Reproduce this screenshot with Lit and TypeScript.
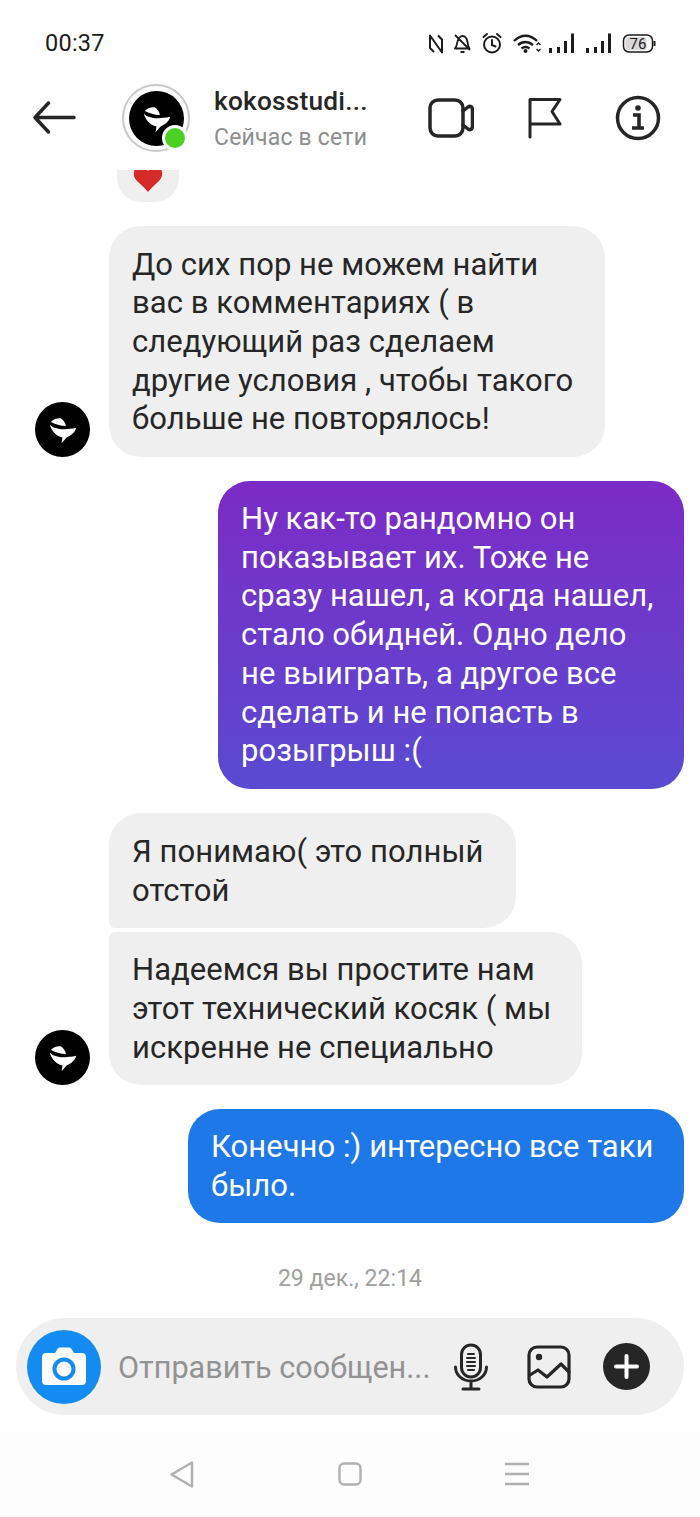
import { LitElement, html, css } from "lit";
import { customElement } from "lit/decorators.js";

const logo = html`<svg class="logo" viewBox="0 0 40 40"><circle cx="20" cy="20" r="20" fill="#000"/><path fill="#fff" d="M11.500 14.500C14 12 17 11.500 19 12C20.500 13 22 15 22.500 17.500C18.500 17.500 14.500 16 11.500 14.500Z"/><path fill="#fff" d="M10.800 16.500C14 19.500 20 21 30 18.800C29 22.500 26 24.500 23 25.800L19.300 30L20 25.800C15 24.500 12 21 10.800 16.500Z"/></svg>`;

@customElement("app-root")
export class AppRoot extends LitElement {
  static styles = css`
    :host { display: block; width: 700px; height: 1517px; background: #fff; overflow: hidden; font-family: Roboto, "Noto Sans", sans-serif; color: #262626; }
    .page { display: flex; flex-direction: column; height: 1517px; }
    .status { flex: none; height: 70px; padding: 15px 42px 0 45px; display: flex; align-items: center; justify-content: space-between; box-sizing: border-box; }
    .time { font-size: 23.500px; color: #1c1c1c; letter-spacing: 0.25px; }
    .status-icons { display: block; }
    .header { flex: none; height: 100px; display: flex; align-items: center; box-sizing: border-box; padding: 0 0 4px 32px; }
    .back { width: 46px; height: 36px; margin-right: 44px; flex: none; }
    .avatar-wrap { position: relative; width: 68px; height: 68px; flex: none; margin-right: 24px; }
    .ring { width: 68px; height: 68px; box-sizing: border-box; border: 2px solid #c9c9c9; border-radius: 50%; display: flex; align-items: center; justify-content: center; }
    .ring .logo { width: 55px; height: 55px; }
    .online { position: absolute; right: 2px; bottom: 1px; width: 20px; height: 20px; background: #4cd024; border: 3px solid #fff; border-radius: 50%; }
    .who { width: 190px; flex: none; padding-bottom: 0; }
    .name { font-size: 26.300px; font-weight: 500; line-height: 32px; color: #262626; letter-spacing: 0.2px; }
    .sub { font-size: 23px; line-height: 30px; margin-top: 6px; margin-bottom: -2px; color: #8e8e8e; letter-spacing: 0.2px; }
    .hicons { display: flex; align-items: center; margin-left: 24px; }
    .flag { margin-left: 53px; }
    .info { margin-left: 52px; }
    .thread { flex: 1; min-height: 0; display: flex; flex-direction: column; padding: 0 16px; }
    .chip { width: 62px; height: 32px; flex: none; background: #efefef; border-radius: 0 0 24px 24px; margin-left: 101px; display: flex; justify-content: center; align-items: flex-start; }
    .row { display: flex; align-items: flex-end; flex: none; }
    .row.in { margin-top: 24px; }
    .row.in .av { width: 55px; height: 55px; flex: none; margin: 0 19px; }
    .av .logo { width: 55px; height: 55px; display: block; }
    .stack { display: flex; flex-direction: column; gap: 4px; align-items: flex-start; }
    .b { box-sizing: border-box; flex: none; border-radius: 32px; padding: 19.500px 23px 17.500px; font-size: 31px; letter-spacing: 0.05px; line-height: 38.700px; background: #efefef; color: #262626; white-space: pre-line; }
    .b.first { border-bottom-left-radius: 6px; }
    .b.last { border-top-left-radius: 6px; }
    .w1 { width: 496px; }
    .w3 { width: 407px; }
    .w4 { width: 473px; }
    .out { align-self: flex-end; color: #fff; margin-top: 24px; }
    .grad { width: 466px; padding-bottom: 18.500px; background: linear-gradient(180deg, #7c2bc5 0%, #5a4ad2 100%); }
    .blue { width: 496px; background: #1f78e8; }
    .date { text-align: center; font-size: 23.100px; color: #a0a0a0; margin-top: 42px; line-height: 28px; }
    .composer { flex: none; margin: 0 16px; height: 97px; background: #efefef; border-radius: 49px; display: flex; align-items: center; padding: 0 34px 0 11px; }
    .cam { width: 74px; height: 74px; background: #148bf0; border-radius: 50%; flex: none; display: flex; align-items: center; justify-content: center; margin-right: 17px; }
    .ph { font-size: 30.600px; color: #929292; width: 316px; flex: none; white-space: nowrap; overflow: hidden; margin-right: 20px; padding-top: 2px; }
    .cicons { display: flex; align-items: center; }
    .pic { margin-left: 39px; }
    .plus { margin-left: 32px; }
    .nav { flex: none; margin-top: 17px; height: 85px; background: #fdfdfd; padding-top: 22px; box-sizing: border-box; display: flex; justify-content: center; }
    .nav svg { display: block; }
  `;

  render() {
    return html`<div class="page">
      <div class="status">
        <span class="time">00:37</span>
        <svg class="status-icons" width="232" height="26" viewBox="0 0 232 26" fill="none" stroke="#1c1c1c">
          <path stroke-width="2" stroke-linejoin="round" d="M8 22 4 18V5.500L16 22.500V9.500L12 5.500"/>
          <path stroke-width="1.800" stroke-linejoin="round" d="M29 18.500c2-2 1.500-4 2.500-7 .7-3 3-5.500 5-5.500 3 0 4.500 3 5 6 .5 3 .5 4.500 2 6.500zM29 5l15 15M34.500 22h4"/>
          <circle stroke-width="2" cx="66" cy="14.500" r="8"/><path stroke-width="2" stroke-linecap="round" d="M66 10v5l3.500 1.500M57.500 7l3.500-3M74.500 7l-3.500-3"/>
          <path stroke-width="2.400" d="M88 11c7-7 16-7 23 0M92 15c4.500-4 10.500-4 15 0M95.500 18.500c2.500-2 5.500-2 8 0"/><circle cx="99.500" cy="21" r="2" fill="#1c1c1c" stroke="none"/><path stroke-width="1.400" d="M110.500 15l2-2 2 2M110.500 19l2 2 2-2"/>
          <g fill="#1c1c1c" stroke="none"><rect x="123" y="18" width="3" height="5"/><rect x="131" y="17" width="3" height="6"/><rect x="138" y="11" width="3" height="12"/><rect x="145" y="3.500" width="3" height="19.500"/><rect x="160" y="18" width="3" height="5"/><rect x="168" y="17" width="3" height="6"/><rect x="175" y="11" width="3" height="12"/><rect x="182" y="3.500" width="3" height="19.500"/></g>
          <rect x="197.500" y="5" width="29" height="17" rx="5.500" stroke-width="1.500"/><rect x="199.500" y="7" width="21" height="13" rx="3" fill="#d8d8d8" stroke="none"/><path d="M228.500 11v5" stroke-width="2"/>
          <text x="212" y="19" font-size="15" text-anchor="middle" fill="#1c1c1c" stroke="none" font-family="Roboto">76</text>
        </svg>
      </div>
      <div class="header">
        <svg class="back" viewBox="0 0 46 36" fill="none" stroke="#262626" stroke-width="3.500" stroke-linecap="round" stroke-linejoin="round"><path d="M42 17.500H3M16.500 3 3 17.500 16.500 32"/></svg>
        <div class="avatar-wrap"><div class="ring">${logo}</div><span class="online"></span></div>
        <div class="who"><div class="name">kokosstudi...</div><div class="sub">Сейчас в сети</div></div>
        <div class="hicons">
          <svg width="46" height="40" viewBox="0 0 46 40" fill="none" stroke="#262626" stroke-width="3.500" stroke-linejoin="round" stroke-linecap="round"><rect x="2" y="2" width="33" height="36" rx="8"/><path d="M35 13l5-4c2.500-1.500 4.500 0 4.500 3v16c0 3-2 4.500-4.500 3l-5-4"/></svg>
          <svg class="flag" width="36" height="42" viewBox="0 0 36 42" fill="none" stroke="#262626" stroke-width="3" stroke-linecap="round" stroke-linejoin="round"><path d="M3 40V2.500h30l-8 12 8 12.500H3"/></svg>
          <svg class="info" width="46" height="46" viewBox="0 0 46 46" fill="none" stroke="#262626"><circle cx="23" cy="23" r="20.500" stroke-width="3.500"/><circle cx="23" cy="13" r="2.800" fill="#262626" stroke="none"/><path stroke-width="3.600" d="M18 20h6v12M17 33h12"/></svg>
        </div>
      </div>
      <div class="thread">
        <div class="chip"><svg width="30" height="22" viewBox="0 0 30 22"><path fill="#d62a2a" d="M1.500 0H14L15 1L16 0H28.500C30 4 29 8 26 11C22 15 18 18 15 22C12 18 8 15 4 11C1 8 0 4 1.500 0Z"/></svg></div>
        <div class="row in">
          <div class="av">${logo}</div>
          <div class="b w1">До сих пор не можем найти
вас в комментариях ( в
следующий раз сделаем
другие условия , чтобы такого
больше не повторялось!</div>
        </div>
        <div class="b out grad">Ну как-то рандомно он
показывает их. Тоже не
сразу нашел, а когда нашел,
стало обидней. Одно дело
не выиграть, а другое все
сделать и не попасть в
розыгрыш :(</div>
        <div class="row in">
          <div class="av">${logo}</div>
          <div class="stack">
            <div class="b first w3">Я понимаю( это полный
отстой</div>
            <div class="b last w4">Надеемся вы простите нам
этот технический косяк ( мы
искренне не специально</div>
          </div>
        </div>
        <div class="b out blue">Конечно :) интересно все таки
было.</div>
        <div class="date">29 дек., 22:14</div>
      </div>
      <div class="composer">
        <div class="cam"><svg width="46" height="40" viewBox="0 0 46 40"><path fill="#fff" d="M14 6l2.500-4c.5-1 1.500-1.500 2.500-1.500h9c1 0 2 .5 2.500 1.500L33 6h8c2.500 0 4 1.500 4 4v24c0 2.500-1.500 4-4 4H5c-2.500 0-4-1.500-4-4V10c0-2.500 1.500-4 4-4z"/><circle cx="23" cy="22" r="9.500" fill="none" stroke="#148bf0" stroke-width="4"/></svg></div>
        <div class="ph">Отправить сообщен...</div>
        <div class="cicons">
          <svg width="34" height="48" viewBox="0 0 34 48" fill="none" stroke="#262626" stroke-width="3" stroke-linecap="round"><rect x="7.500" y="2" width="19" height="32" rx="9.500"/><path d="M1.500 24c0 8 7 14 15.500 14s15.500-6 15.500-14M17 38v8M9 46h16"/><path stroke-width="2" d="M14 11h6M13 15h8M13 19h8M13 23h8M14 27h6"/></svg>
          <svg class="pic" width="44" height="44" viewBox="0 0 44 44" fill="none" stroke="#262626" stroke-width="3.200" stroke-linejoin="round"><rect x="2" y="2" width="40" height="40" rx="8"/><circle cx="12" cy="12" r="3.200" fill="#262626" stroke="none"/><path stroke-linecap="round" d="M3 30l8-5 9 7 14-13 8 8"/></svg>
          <svg class="plus" width="47" height="47" viewBox="0 0 47 47"><circle cx="23.500" cy="23.500" r="23.500" fill="#262626"/><path stroke="#fff" stroke-width="4" stroke-linecap="round" d="M23.500 13v21M13 23.500h21"/></svg>
        </div>
      </div>
      <div class="nav">
        <svg width="360" height="40" viewBox="0 0 360 40" fill="none" stroke="#b0b0b0" stroke-width="2.400" stroke-linejoin="round"><path d="M22 8.500v24L1.500 20.500z"/><rect x="169.500" y="9.500" width="21" height="21" rx="4.500"/><path d="M335 10h24M335 20h24M335 30h24"/></svg>
      </div>
    </div>`;
  }
}
